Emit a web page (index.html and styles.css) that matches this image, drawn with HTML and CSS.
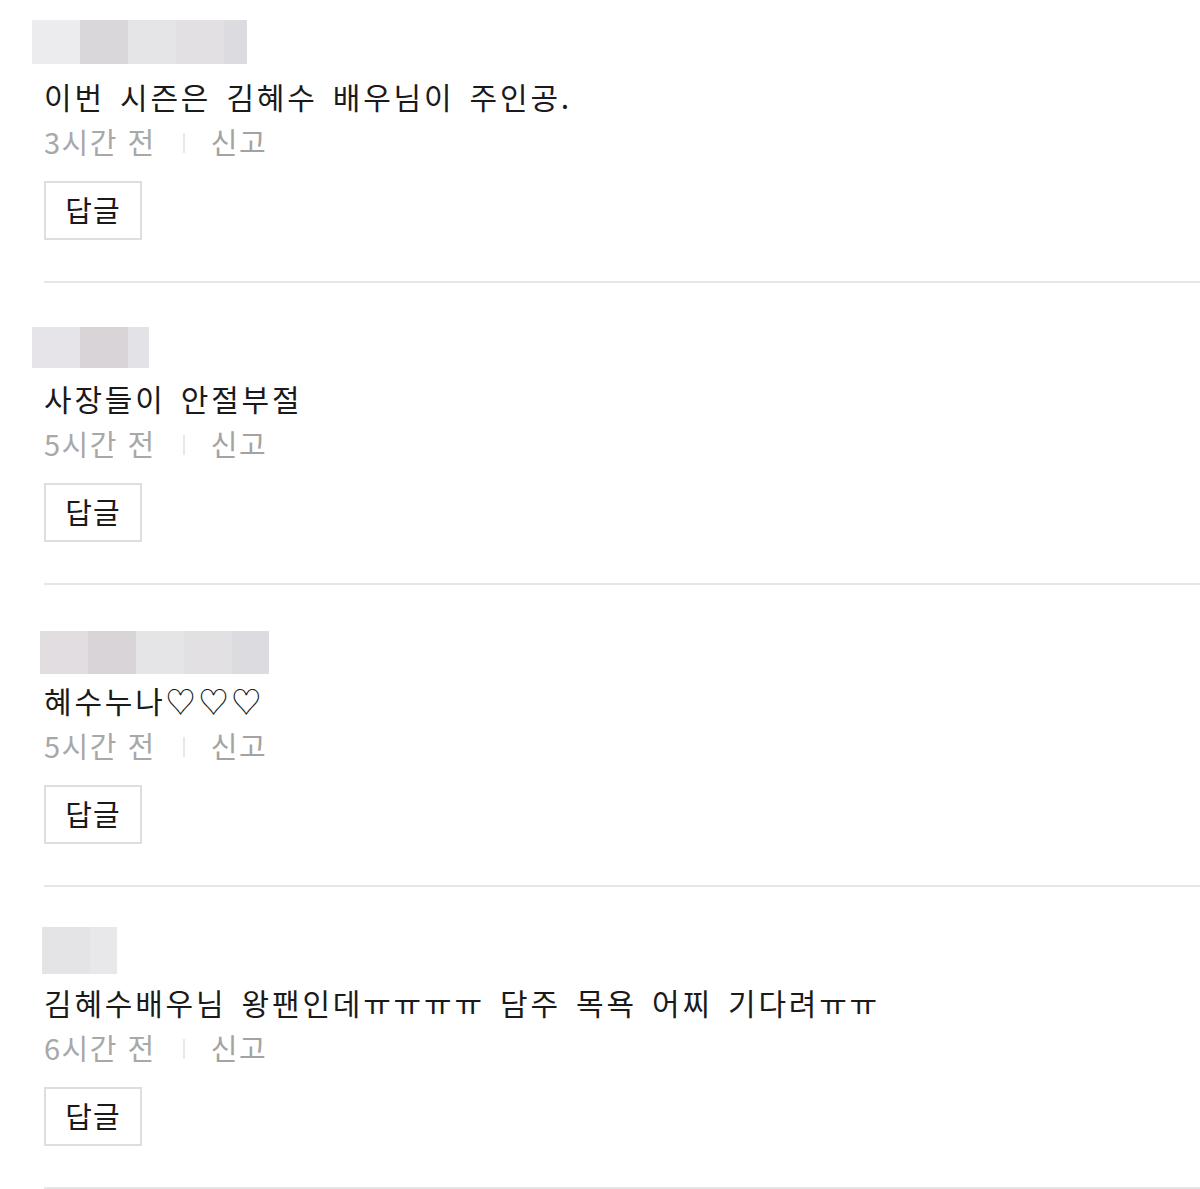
FILE: index.html
```html
<!DOCTYPE html>
<html lang="ko">
<head>
<meta charset="utf-8">
<title>댓글</title>
<link rel="stylesheet" href="styles.css">
</head>
<body>
<ul class="comments">
  <li class="comment first">
    <div class="nick-row">
      <div class="nick nick-1">
        <span class="px c1"></span><span class="px c2"></span><span class="px c3"></span><span class="px c4"></span><span class="px c5 half"></span>
      </div>
    </div>
    <p class="text">이번 시즌은 김혜수 배우님이 주인공.</p>
    <div class="meta"><span class="time">3시간 전</span><span class="bar"></span><span class="report">신고</span></div>
    <button class="reply" type="button">답글</button>
    <hr class="sep">
  </li>
  <li class="comment">
    <div class="nick-row">
      <div class="nick nick-2">
        <span class="px c6"></span><span class="px c7"></span><span class="px c8 small"></span>
      </div>
    </div>
    <p class="text">사장들이 안절부절</p>
    <div class="meta"><span class="time">5시간 전</span><span class="bar"></span><span class="report">신고</span></div>
    <button class="reply" type="button">답글</button>
    <hr class="sep">
  </li>
  <li class="comment">
    <div class="nick-row">
      <div class="nick nick-3">
        <span class="px c9"></span><span class="px c7"></span><span class="px c3"></span><span class="px c4"></span><span class="px c5 mid"></span>
      </div>
    </div>
    <p class="text">혜수누나♡♡♡</p>
    <div class="meta"><span class="time">5시간 전</span><span class="bar"></span><span class="report">신고</span></div>
    <button class="reply" type="button">답글</button>
    <hr class="sep">
  </li>
  <li class="comment">
    <div class="nick-row">
      <div class="nick nick-4">
        <span class="px c10"></span><span class="px c11 quarter"></span>
      </div>
    </div>
    <p class="text">김혜수배우님 왕팬인데ㅠㅠㅠㅠ 담주 목욕 어찌 기다려ㅠㅠ</p>
    <div class="meta"><span class="time">6시간 전</span><span class="bar"></span><span class="report">신고</span></div>
    <button class="reply" type="button">답글</button>
    <hr class="sep">
  </li>
</ul>
</body>
</html>
```

FILE: styles.css
```css
html, body {
  margin: 0;
  padding: 0;
  background: #ffffff;
  overflow: hidden;
}

body {
  font-family: "Noto Sans CJK KR", "Noto Sans", sans-serif;
  color: #1a1a1a;
}

.comments {
  list-style: none;
  margin: 0;
  padding: 0 0 0 44px;
}

.comment {
  display: flex;
  flex-direction: column;
  align-items: flex-start;
  height: 302px;
}

.comment.first {
  margin-top: -19px;
}

.nick-row {
  height: 97px;
  display: flex;
  align-items: flex-start;
}

.nick {
  display: flex;
}

.px {
  display: block;
  width: 48px;
  height: 100%;
}
.px.half { width: 23px; }
.px.small { width: 21px; }
.px.mid { width: 37px; }
.px.quarter { width: 27px; }

.nick-1 { margin: 39px 0 0 -12px; height: 44px; }
.nick-2 { margin: 44px 0 0 -12px; height: 41px; }
.nick-3 { margin: 46px 0 0 -4px; height: 43px; }
.nick-4 { margin: 40px 0 0 -2px; height: 47px; }

.c1 { background: #ececee; }
.c2 { background: #d9d7da; }
.c3 { background: #e5e4e7; }
.c4 { background: #e3e0e3; }
.c5 { background: #dcdbdf; }
.c6 { background: #e6e4e8; }
.c7 { background: #d9d4d8; }
.c8 { background: #e3e2e6; }
.c9 { background: #e1dde0; }
.c10 { background: #e4e3e5; }
.c11 { background: #e8e7ea; }

.text {
  margin: 0;
  font-size: 30px;
  line-height: 36px;
  letter-spacing: 2.8px;
  word-spacing: 4px;
  white-space: nowrap;
  color: #1a1a1a;
}

.meta {
  margin-top: 10px;
  display: flex;
  align-items: center;
  font-size: 29px;
  line-height: 34px;
  letter-spacing: 1.5px;
  white-space: nowrap;
}

.time {
  color: #a8a8a8;
}

.bar {
  display: block;
  width: 2px;
  height: 20px;
  margin: 4px 26px 0 27px;
  background: #e6e8ee;
}

.report {
  color: #a3a3a3;
}

.reply {
  margin-top: 23px;
  box-sizing: border-box;
  width: 98px;
  height: 59px;
  padding: 0 0 3px 0;
  border: 2px solid #dedede;
  background: #ffffff;
  font-family: "Noto Sans CJK KR", "Noto Sans", sans-serif;
  font-size: 29px;
  line-height: 50px;
  letter-spacing: 1px;
  color: #1a1a1a;
}

.sep {
  margin: 41px 0 0 0;
  width: calc(100vw - 44px);
  height: 2px;
  border: 0;
  background: #e6e6e6;
  flex: none;
}
```
